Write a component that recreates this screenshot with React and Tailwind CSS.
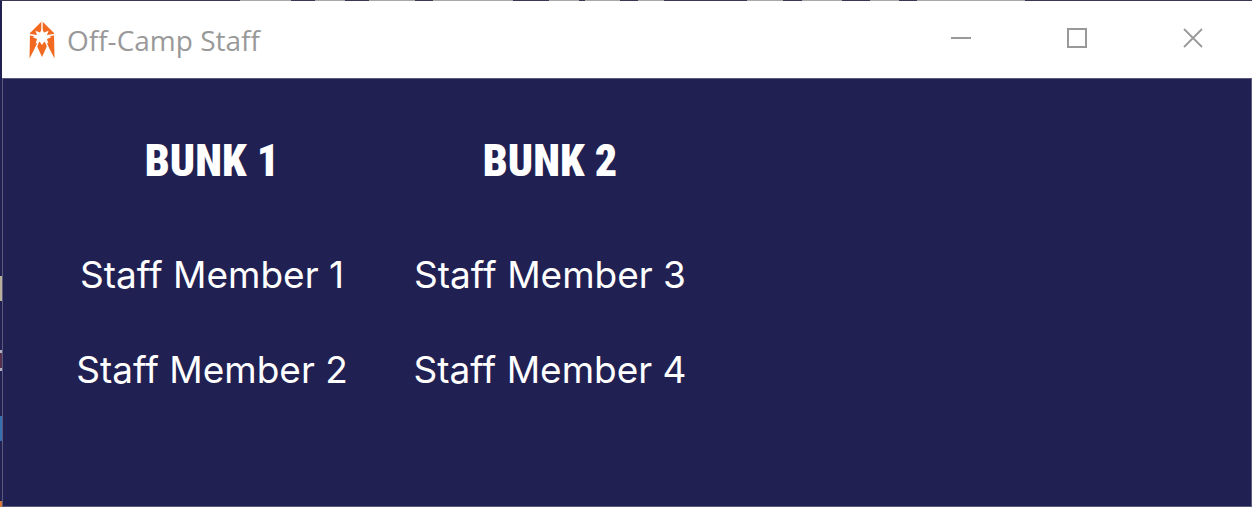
const bunks = [
  { name: "Bunk 1", staff: ["Staff Member 1", "Staff Member 2"] },
  { name: "Bunk 2", staff: ["Staff Member 3", "Staff Member 4"] },
];

function Logo() {
  return (
    <svg viewBox="0 0 26 38" className="h-[38px] w-[26px]" aria-hidden="true">
      <path d="M13 0 L25 12 L25.5 37.5 L18.5 24 L13 36 L7.5 24 L0.5 37.5 L1 12 Z" fill="#f26a21" />
      <path d="M13 0V10M0 13.5L9 15M26 13.5L17 15M10 19L5 32M16 19L21 32" stroke="#ffffff" strokeWidth="1.4" fill="none" />
      <path
        d="M13 8 L15 11.6 L19.6 9.8 L18 14 L22.5 16 L18 18 L19.4 22.4 L15.2 20.8 L13 24 L10.8 20.8 L6.6 22.4 L8 18 L3.5 16 L8 14 L6.4 9.8 L11 11.6 Z"
        fill="#ffffff"
      />
    </svg>
  );
}

function WindowButton({ label, children }) {
  return (
    <button type="button" aria-label={label} className="flex h-full w-[116px] items-center justify-center">
      <svg viewBox="0 0 20 20" className="size-5" fill="none" stroke="#999999">
        {children}
      </svg>
    </button>
  );
}

// Slivers of the desktop that show past the window's top and left edges.
function TopSliver() {
  return (
    <svg className="block h-px w-full" shapeRendering="crispEdges" aria-hidden="true">
      <path
        stroke="#a9a7a8"
        strokeWidth="2"
        d="M240 0H291M315 0H345M369 0H415M433 0H513M549 0H579M585 0H620M638 0H664M747 0H783M802 0H842M870 0H899M917 0H1025"
      />
    </svg>
  );
}

function LeftSliver() {
  return (
    <svg className="w-0.5 shrink-0 bg-[#212052]" shapeRendering="crispEdges" aria-hidden="true">
      <rect y="275" width="2" height="25" fill="#b8b09a" />
      <rect y="349" width="2" height="21" fill="#b3b0c4" />
      <rect y="352" width="2" height="15" fill="#56304f" />
      <rect y="415" width="2" height="25" fill="#3670b0" />
      <rect y="500" width="2" height="6" fill="#d9773c" />
    </svg>
  );
}

export default function App() {
  return (
    <div className="flex min-h-screen flex-col bg-[#3b3654]">
      <TopSliver />
      <div className="flex flex-1">
        <LeftSliver />
        <div className="flex flex-1 flex-col">
          <header className="flex h-[77px] items-center bg-white pr-px pl-[27px]">
            <Logo />
            <h1 className="ml-3 flex-1 font-['Open_Sans',sans-serif] text-[28px] text-[#999999]">Off-Camp Staff</h1>
            <div className="flex h-full items-center pb-1">
              <WindowButton label="Minimize"><path d="M0 10H20" strokeWidth="2" /></WindowButton>
              <WindowButton label="Maximize"><path d="M1 1H19V19H1Z" strokeWidth="2" /></WindowButton>
              <WindowButton label="Close"><path d="M1 1L19 19M19 1L1 19" strokeWidth="1.8" /></WindowButton>
            </div>
          </header>
          <main className="flex-1 border border-[#5b5a7c] bg-[#212052] pt-9 pl-10 text-white">
            <table className="text-center">
              <thead>
                <tr>
                  {bunks.map((b) => (
                    <th key={b.name} scope="col" className="h-[92px] w-[338px] font-['Roboto_Condensed','Roboto',sans-serif] text-[44px] leading-none font-black uppercase">{b.name}</th>
                  ))}
                </tr>
              </thead>
              <tbody className="font-['Inter',sans-serif] text-[37px]">
                {[0, 1].map((row) => (
                  <tr key={row}>
                    {bunks.map((b) => (
                      <td key={b.name} className="h-[95px] pt-10 leading-none">{b.staff[row]}</td>
                    ))}
                  </tr>
                ))}
              </tbody>
            </table>
          </main>
        </div>
      </div>
    </div>
  );
}
